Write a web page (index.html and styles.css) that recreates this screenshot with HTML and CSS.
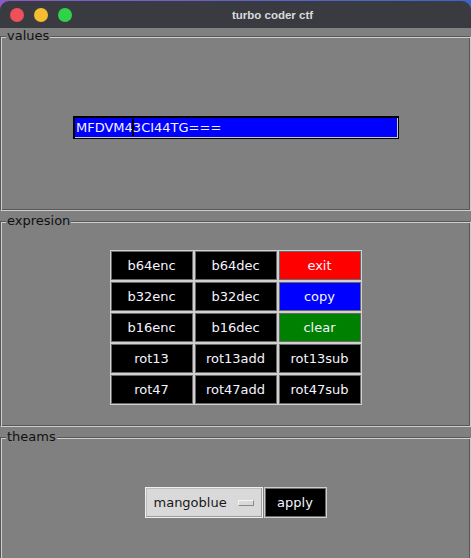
FILE: index.html
```html
<!DOCTYPE html>
<html>
<head>
<meta charset="utf-8">
<title>turbo coder ctf</title>
<link rel="stylesheet" href="styles.css">
</head>
<body>
<div class="window">
  <div class="titlebar">
    <div class="lights">
      <span class="light red"></span>
      <span class="light yellow"></span>
      <span class="light green"></span>
    </div>
    <div class="title">turbo coder ctf</div>
  </div>
  <div class="content">
    <section class="frame frame-values">
      <span class="frame-label">values</span>
      <div class="entry">MFDVM4<span class="caret"></span>3CI44TG===</div>
    </section>
    <section class="frame frame-expr">
      <span class="frame-label">expresion</span>
      <div class="grid">
        <div class="btn">b64enc</div>
        <div class="btn">b64dec</div>
        <div class="btn btn-red">exit</div>
        <div class="btn">b32enc</div>
        <div class="btn">b32dec</div>
        <div class="btn btn-blue">copy</div>
        <div class="btn">b16enc</div>
        <div class="btn">b16dec</div>
        <div class="btn btn-green">clear</div>
        <div class="btn">rot13</div>
        <div class="btn">rot13add</div>
        <div class="btn">rot13sub</div>
        <div class="btn">rot47</div>
        <div class="btn">rot47add</div>
        <div class="btn">rot47sub</div>
      </div>
    </section>
    <section class="frame frame-theme">
      <span class="frame-label">theams</span>
      <div class="theme-row">
        <div class="combo">
          <span class="combo-text">mangoblue</span>
          <span class="combo-ind"></span>
        </div>
        <div class="btn btn-apply">apply</div>
      </div>
    </section>
  </div>
</div>
</body>
</html>
```
FILE: styles.css
```css
html, body {
  margin: 0;
  padding: 0;
}
body {
  width: 471px;
  height: 558px;
  overflow: hidden;
  background: linear-gradient(90deg, #8a5cc4 0%, #5a64c8 60%, #3b66c9 100%);
  font-family: "DejaVu Sans", sans-serif;
}
.window {
  padding-top: 1px;
}
.titlebar {
  height: 27px;
  background: #3a3b40;
  border-radius: 9px 9px 0 0;
  display: flex;
  align-items: center;
}
.lights {
  display: flex;
  gap: 10px;
  padding-left: 10px;
  width: 64px;
  margin-top: 1px;
}
.light {
  width: 14px;
  height: 14px;
  border-radius: 50%;
  display: block;
}
.red { background: #ef4f58; }
.yellow { background: #f7bd32; }
.green { background: #30d24a; }
.title {
  flex: 1;
  text-align: center;
  font-family: "Liberation Sans", Arial, sans-serif;
  font-weight: bold;
  font-size: 11.5px;
  color: #d9d9dc;
  padding-right: 0;
}
.content {
  background: #808080;
  height: 530px;
  display: flex;
  flex-direction: column;
  gap: 2px;
}
.frame {
  position: relative;
  margin-top: 8px;
  border: 1px solid;
  border-color: #575757 #cfcfcf #cfcfcf #575757;
  box-shadow: inset 1px 1px 0 #cfcfcf, inset -1px -1px 0 #575757;
  box-sizing: border-box;
  flex: none;
}
.frame-label {
  position: absolute;
  top: -9px;
  left: 5px;
  padding: 0 1px;
  background: #808080;
  font-size: 13px;
  line-height: 16px;
  color: #111;
}
.frame-values {
  height: 175px;
  display: flex;
  justify-content: center;
  align-items: center;
  padding-top: 8px;
}
.entry {
  width: 326px;
  height: 23px;
  box-sizing: border-box;
  background: #0000ff;
  border: 1px solid #000;
  box-shadow: inset 1px 1px 0 #000, inset -1px -1px 0 #cfcfcf;
  color: #f4f4ff;
  font-size: 13px;
  line-height: 21px;
  padding-left: 2px;
  white-space: nowrap;
  margin-left: 1px;
}
.caret {
  display: inline-block;
  width: 2px;
  height: 17px;
  background: #000;
  margin: 0 -1px;
  vertical-align: -4px;
}
.frame-expr {
  height: 206px;
  display: flex;
  justify-content: center;
  align-items: center;
  padding-top: 7px;
}
.grid {
  display: grid;
  grid-template-columns: repeat(3, 84px);
  grid-auto-rows: 31px;
}
.btn {
  box-sizing: border-box;
  border: 1px solid #d0d0d0;
  box-shadow: inset 0 0 0 1px #6a6a6a;
  background: #000;
  color: #f4f4ff;
  font-size: 13px;
  display: flex;
  align-items: center;
  justify-content: center;
}
.btn-red { background: #ff0000; }
.btn-blue { background: #0000ff; }
.btn-green { background: #008000; }
.frame-theme {
  height: 140px;
  padding-top: 49px;
}
.theme-row {
  display: flex;
  justify-content: center;
  gap: 1px;
}
.combo {
  width: 118px;
  height: 31px;
  box-sizing: border-box;
  background: #d9d9d9;
  border: 1px solid #f0f0f0;
  box-shadow: inset -1px -1px 0 #9c9c9c, inset 1px 1px 0 #bdbdbd;
  display: flex;
  align-items: center;
  padding-left: 8px;
  color: #1a1a1a;
  font-size: 13px;
}
.combo-text {
  flex: 1;
}
.combo-ind {
  width: 16px;
  height: 6px;
  box-sizing: border-box;
  background: #d9d9d9;
  border: 1px solid;
  border-color: #f4f4f4 #8a8a8a #8a8a8a #f4f4f4;
  margin-right: 8px;
  margin-top: 1px;
}
.btn-apply {
  width: 63px;
  height: 31px;
}
```
